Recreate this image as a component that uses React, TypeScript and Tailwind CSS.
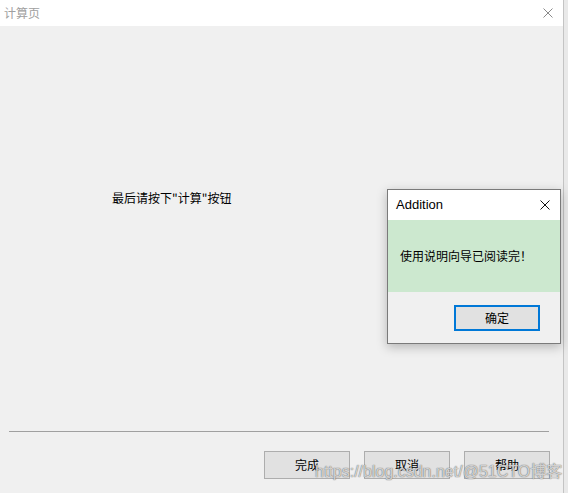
const cjk = "font-['Microsoft_YaHei','Noto_Sans_CJK_SC',sans-serif]";

function CloseX({ color, size = 10 }: { color: string; size?: number }) {
  return (
    <svg width={size} height={size} viewBox="0 0 10 10" fill="none">
      <path d="M0.5 0.5 L9.5 9.5 M9.5 0.5 L0.5 9.5" stroke={color} strokeWidth="1" />
    </svg>
  );
}

function WinButton({ label }: { label: string }) {
  return (
    <div
      className={
        "flex h-[28px] w-[86px] items-center justify-center border border-[#adadad] bg-[#e1e1e1] text-[12px] text-black " +
        cjk
      }
    >
      {label}
    </div>
  );
}

export default function App() {
  return (
    <div className="relative flex h-[493px] w-[568px] overflow-hidden bg-[#f0f0f0]">
      {/* main wizard window */}
      <div className="flex w-[563px] flex-col">
        <div className="flex h-[26px] items-center justify-between bg-white pl-[4px] pr-[10px]">
          <span className={"text-[12px] text-[#a0a0a0] " + cjk}>计算页</span>
          <CloseX color="#8a8a8a" />
        </div>

        <div className="flex-1 pl-[112px] pt-[164px]">
          <p className={"text-[12px] leading-[16px] text-black " + cjk}>最后请按下"计算"按钮</p>
        </div>

        <div className="ml-[9px] mr-[14px] h-px bg-[#a0a0a0]" />

        <div className="flex justify-end gap-[14px] pb-[14px] pr-[13px] pt-[19px]">
          <WinButton label="完成" />
          <WinButton label="取消" />
          <WinButton label="帮助" />
        </div>
      </div>

      {/* right edge of the window behind */}
      <div className="w-[5px] border-l border-[#c4c4c4] bg-[#e9e9e9]" />

      {/* message box */}
      <div className="absolute left-[387px] top-[189px] flex h-[155px] w-[174px] flex-col border border-[#7a7a7a] bg-[#f0f0f0] shadow-[0_3px_10px_rgba(0,0,0,0.25)]">
        <div className="flex h-[30px] items-center justify-between bg-white pl-[8px] pr-[10px]">
          <span className="font-['Liberation_Sans',sans-serif] text-[13px] text-black">Addition</span>
          <CloseX color="#111" />
        </div>
        <div className="flex h-[72px] items-center bg-[#cce8cf] pl-[12px]">
          <span className={"text-[12px] text-black " + cjk}>使用说明向导已阅读完！</span>
        </div>
        <div className="flex flex-1 justify-end pr-[20px] pt-[13px]">
          <div className={"flex h-[26px] w-[86px] items-center justify-center border-2 border-[#0078d7] bg-[#e1e1e1] text-[12px] text-black " + cjk}>
            确定
          </div>
        </div>
      </div>

      {/* watermark */}
      <div
        className={
          "pointer-events-none absolute left-[315px] top-[462px] whitespace-nowrap font-['Liberation_Sans','Noto_Sans_CJK_SC',sans-serif] text-[16px] leading-[20px] text-[rgba(255,255,255,0.7)] [text-shadow:0_0_1px_rgba(90,90,90,0.9),0_0_1px_rgba(90,90,90,0.6)]"
        }
      >
        https://blog.csdn.net/@51CTO博客
      </div>
    </div>
  );
}
